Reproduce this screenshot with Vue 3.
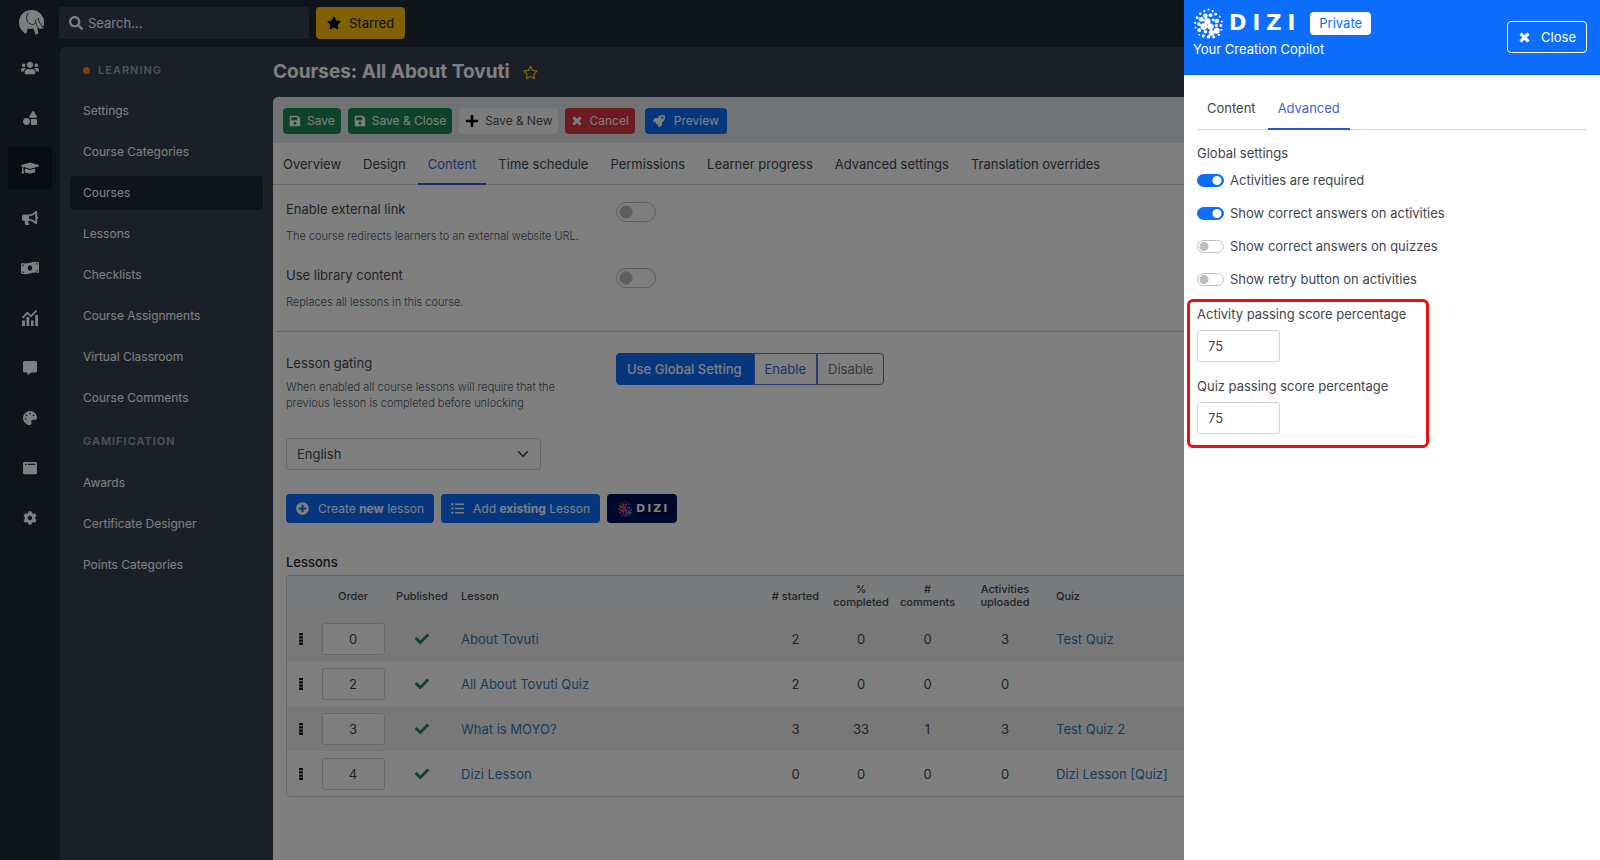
<script setup>
import { ref } from 'vue'

const icons = {
  users: { w: 640, d: 'M96 224c35.300 0 64-28.700 64-64s-28.700-64-64-64-64 28.700-64 64 28.700 64 64 64zm448 0c35.300 0 64-28.700 64-64s-28.700-64-64-64-64 28.700-64 64 28.700 64 64 64zm32 32h-64c-17.600 0-33.500 7.100-45.100 18.600 40.300 22.100 68.900 62 75.100 109.400h66c17.700 0 32-14.300 32-32v-32c0-35.300-28.700-64-64-64zm-256 0c61.900 0 112-50.100 112-112S381.900 32 320 32 208 82.100 208 144s50.100 112 112 112zm76.800 32h-8.300c-20.800 10-43.900 16-68.500 16s-47.600-6-68.500-16h-8.300C179.600 288 128 339.600 128 403.200V432c0 26.500 21.500 48 48 48h288c26.500 0 48-21.500 48-48v-28.800c0-63.600-51.600-115.200-115.200-115.200zm-223.700-13.400C161.500 263.100 145.600 256 128 256H64c-35.300 0-64 28.700-64 64v32c0 17.700 14.300 32 32 32h65.900c6.300-47.400 34.900-87.300 75.200-109.400z' },
  shapes: { w: 512, d: 'M128 256C57.300 256 0 313.300 0 384s57.300 128 128 128 128-57.300 128-128-57.300-128-128-128zm379-54.900L400.100 18.300c-15.300-25.100-49-23.200-62.300 0L229 201.100c-12.200 20.900 3.100 47 27.700 47H479.300c24.600 0 39.900-26.100 27.700-47zM480 288H320c-17.700 0-32 14.300-32 32v160c0 17.700 14.300 32 32 32h160c17.700 0 32-14.300 32-32V320c0-17.700-14.300-32-32-32z' },
  cap: { w: 640, d: 'M622.300 153.200L343.400 67.500c-15.200-4.700-31.600-4.700-46.800 0L17.700 153.200c-23.600 7.300-23.600 38.200 0 45.500l48.600 14.900c-10.700 13.200-17.200 29.300-17.800 46.900C38.800 266.100 32 276.200 32 288c0 10.800 5.700 19.900 13.900 25.700L20.300 428.500C18.100 438.500 25.700 448 35.900 448h56.100c10.300 0 17.900-9.500 15.700-19.500L82.100 313.700C90.300 307.900 96 298.800 96 288c0-11.500-6.500-21.200-15.700-26.900.8-15.200 8.500-28.500 20.700-36.900L296.600 284.500c9.100 2.800 27 6.300 46.800 0l278.900-85.700c23.600-7.300 23.600-38.200 0-45.600zM352.800 315.100c-28.500 8.800-52.800 3.900-65.600 0l-145-44.600L128 384c0 35.300 86 64 192 64s192-28.700 192-64l-14.200-113.500z' },
  bullhorn: { w: 576, d: 'M576 240c0-23.600-12.900-44-32-55.100V32c0-8.700-7-32-32-32-7.100 0-14.200 2.400-20 7l-85 68c-42.700 34.200-96.300 53-151 53H64c-35.300 0-64 28.700-64 64v96c0 35.300 28.700 64 64 64h33.700c-1.400 10.500-2.200 21.200-2.200 32.200 0 39.800 9.300 77.300 25.600 110.900 5.200 10.700 16.500 16.900 28.400 16.900h74.300c26.100 0 41.700-29.800 25.900-50.600-16.400-21.500-26.200-48.200-26.200-77.200 0-11.200 1.600-22 4.300-32.200H256c54.700 0 108.300 18.800 151 53l85 68c5.700 4.500 12.700 7 20 7 24.900 0 32-22.800 32-32V295.100c19.100-11.100 32-31.500 32-55.100zm-96 141.400l-33-26.400c-54-43.200-121.900-67-191-67v-96c69.100 0 137-23.800 191-67l33-26.400z' },
  money: { w: 640, d: 'M621.200 54.500C582.400 38.200 543.600 32 504.800 32c-123.200 0-246.300 62.300-369.500 62.300-30.900 0-61.800-3.900-92.700-13.700C38.900 79.400 35.200 78.900 31.600 78.900 15 78.900 0 91.300 0 108.400v317.200c0 12.600 7.200 24.600 18.800 29.500C57.600 471.400 96.400 480 135.200 480c123.200 0 246.400-62.300 369.500-62.300 30.900 0 61.800 3.900 92.700 13.700 3.700 1.200 7.400 1.700 11 1.700 16.600 0 31.600-12.400 31.600-29.500V84c0-12.600-7.200-24.600-18.800-29.500zM48 132.200c20.100 5 41.100 7.600 62.200 9.100C105.100 169.900 79.500 192 48 192zm0 285v-47.800c34.400 0 62.200 27.300 63.900 61.300-22.700-1.700-44.100-6.100-63.900-13.500zM320 352c-44.200 0-80-43-80-96 0-53 35.800-96 80-96s80 43 80 96-35.800 96-80 96zm272 27.800c-17.500-4.400-35.600-6.900-54-8.500 4-26.800 26.500-47.600 54-49.400zm0-236.100c-30.900-2.100-55.500-27.100-56.400-58.300 19.500 2 38.600 5.700 56.400 11.900z' },
  comment: { w: 512, d: 'M448 0H64C28.700 0 0 28.700 0 64v288c0 35.300 28.700 64 64 64h96v84c0 9.800 11.200 15.500 19.100 9.700L304 416h144c35.300 0 64-28.700 64-64V64c0-35.300-28.700-64-64-64z' },
  palette: { w: 512, d: 'M204.300 5C104.900 24.400 24.800 104.300 5.200 203.400c-37 187 131.700 326.400 258.800 306.700 41.200-6.400 61.400-54.600 42.500-91.700-23.100-45.400 9.900-98.400 60.900-98.400h79.700c35.800 0 64.800-29.600 64.900-65.300C511.500 97.100 368.100-26.900 204.300 5zM96 320c-17.700 0-32-14.300-32-32s14.300-32 32-32 32 14.300 32 32-14.300 32-32 32zm32-128c-17.700 0-32-14.300-32-32s14.300-32 32-32 32 14.300 32 32-14.300 32-32 32zm128-64c-17.700 0-32-14.300-32-32s14.300-32 32-32 32 14.300 32 32-14.300 32-32 32zm128 64c-17.700 0-32-14.300-32-32s14.300-32 32-32 32 14.300 32 32-14.300 32-32 32z' },
  window: { w: 512, d: 'M464 32H48C21 32 0 53 0 80v352c0 27 21 48 48 48h416c27 0 48-21 48-48V80c0-27-21-48-48-48zM128 144H64V96h64zm320 0H176V96h272z' },
  cog: { w: 512, d: 'M487.400 315.700l-42.600-24.600c4.300-23.200 4.300-47 0-70.200l42.600-24.600c4.900-2.800 7.100-8.600 5.500-14-11.100-35.600-30-67.800-54.700-94.600-3.800-4.100-10-5.100-14.800-2.300L380.800 110c-17.900-15.400-38.500-27.300-60.800-35.100V25.800c0-5.600-3.900-10.500-9.400-11.700-36.700-8.200-74.300-7.800-109.200 0-5.500 1.200-9.400 6.100-9.400 11.700V75c-22.200 7.900-42.800 19.800-60.800 35.100L88.700 85.500c-4.900-2.800-11-1.900-14.800 2.300-24.700 26.700-43.600 58.900-54.700 94.600-1.700 5.400.6 11.200 5.500 14L67.300 221c-4.300 23.200-4.300 47 0 70.200l-42.600 24.600c-4.900 2.800-7.100 8.600-5.500 14 11.100 35.600 30 67.800 54.700 94.600 3.800 4.100 10 5.100 14.800 2.300l42.600-24.600c17.900 15.400 38.500 27.300 60.800 35.100v49.200c0 5.600 3.900 10.500 9.400 11.700 36.700 8.200 74.300 7.800 109.200 0 5.500-1.200 9.400-6.100 9.400-11.700v-49.200c22.200-7.900 42.800-19.800 60.800-35.100l42.600 24.600c4.900 2.800 11 1.900 14.800-2.300 24.700-26.700 43.600-58.900 54.700-94.600 1.500-5.500-.7-11.300-5.600-14.100zM256 336c-44.100 0-80-35.900-80-80s35.900-80 80-80 80 35.900 80 80-35.900 80-80 80z' },
  chart: { w: 512, d: 'M10 216L152 74c14-14 32-14 46 0l86 84L432 12h-2c12-12 30-12 42 0s12 30 0 42L308 218c-14 14-32 14-46 0l-87-84L52 257c-12 12-30 12-42 0s-12-29 0-41zM0 336h96v176H0zm144-112h88v288h-88zm144 112h80v176h-80zm136-176h88v352h-88z' },
  search: { w: 512, d: 'M505 442.700L405.300 343c-4.500-4.500-10.600-7-17-7H372c27.600-35.300 44-79.700 44-128C416 93.100 322.900 0 208 0S0 93.100 0 208s93.100 208 208 208c48.300 0 92.700-16.400 128-44v16.300c0 6.400 2.500 12.500 7 17l99.700 99.700c9.400 9.400 24.600 9.400 33.900 0l28.300-28.300c9.400-9.400 9.400-24.600.1-34zM208 336c-70.700 0-128-57.200-128-128 0-70.700 57.200-128 128-128 70.700 0 128 57.200 128 128 0 70.700-57.200 128-128 128z' },
  star: { w: 576, d: 'M259.300 17.800L194 150.200 47.900 171.500c-26.200 3.800-36.700 36.100-17.700 54.600l105.700 103-25 145.500c-4.500 26.300 23.200 46 46.400 33.700L288 439.600l130.700 68.700c23.200 12.200 50.900-7.400 46.400-33.700l-25-145.500 105.700-103c19-18.500 8.500-50.800-17.700-54.600L382 150.200 316.700 17.800c-11.700-23.600-45.600-23.900-57.400 0z' },
  starOutline: { w: 576, d: 'M528.100 171.500L382 150.200 316.700 17.800c-11.700-23.600-45.600-23.900-57.400 0L194 150.200 47.900 171.500c-26.200 3.800-36.700 36.100-17.700 54.600l105.700 103-25 145.500c-4.500 26.300 23.200 46 46.400 33.700L288 439.600l130.700 68.700c23.200 12.200 50.900-7.400 46.400-33.700l-25-145.500 105.700-103c19-18.500 8.500-50.800-17.700-54.600zM388.600 312.300l23.700 138.400L288 385.400l-124.300 65.300 23.700-138.400-100.600-98 139-20.200 62.200-126 62.200 126 139 20.200-100.600 98z' },
  save: { w: 448, d: 'M433.900 129.900l-83.900-83.900A48 48 0 0 0 316.100 32H48C21.500 32 0 53.500 0 80v352c0 26.500 21.500 48 48 48h352c26.500 0 48-21.500 48-48V163.900a48 48 0 0 0-14.100-34zM224 416c-35.300 0-64-28.700-64-64s28.700-64 64-64 64 28.700 64 64-28.700 64-64 64zm96-304.500V212c0 6.600-5.400 12-12 12H76c-6.600 0-12-5.400-12-12V108c0-6.600 5.400-12 12-12h228.500c3.200 0 6.200 1.300 8.500 3.500l3.500 3.500c2.200 2.200 3.500 5.300 3.500 8.500z' },
  plus: { w: 448, d: 'M416 208H272V64c0-17.700-14.300-32-32-32h-32c-17.700 0-32 14.300-32 32v144H32c-17.700 0-32 14.300-32 32v32c0 17.700 14.300 32 32 32h144v144c0 17.700 14.300 32 32 32h32c17.700 0 32-14.300 32-32V304h144c17.700 0 32-14.300 32-32v-32c0-17.700-14.300-32-32-32z' },
  times: { w: 384, d: 'M323.100 441l53.900-53.900c9.400-9.400 9.400-24.500 0-33.900L279.800 256l97.200-97.200c9.400-9.400 9.400-24.500 0-33.900L323.100 71c-9.400-9.400-24.500-9.400-33.900 0L192 168.200 94.800 71c-9.400-9.400-24.500-9.400-33.900 0L7 124.900c-9.400 9.400-9.400 24.500 0 33.900l97.200 97.200L7 353.200c-9.400 9.400-9.400 24.500 0 33.900L60.900 441c9.400 9.400 24.500 9.400 33.900 0l97.200-97.200 97.200 97.200c9.300 9.300 24.500 9.300 33.900 0z' },
  rocket: { w: 512, d: 'M505.100 19.100C503.800 13 499 8.200 492.900 6.900 460.700 0 435.500 0 410.400 0 307.200 0 245.300 55.200 199 128H94.900c-18.200 0-34.800 10.300-42.900 26.500L2.600 253.300c-8 16 3.600 34.700 21.500 34.700h95.100c-5.900 12.800-11.900 25.500-18 37.700-3.100 6.200-1.900 13.600 3 18.500l63.600 63.600c4.900 4.900 12.300 6.100 18.500 3 12.200-6.100 24.900-12 37.700-17.900V488c0 17.800 18.800 29.400 34.700 21.500l98.700-49.400c16.300-8.100 26.500-24.800 26.500-42.900V313c72.600-46.400 128-108.500 128-211.100.1-25.200.1-50.400-6.800-82.800zM400 160c-26.500 0-48-21.500-48-48s21.500-48 48-48 48 21.500 48 48-21.500 48-48 48z' },
  plusCircle: { w: 512, d: 'M256 8C119 8 8 119 8 256s111 248 248 248 248-111 248-248S393 8 256 8zm144 276c0 6.600-5.400 12-12 12h-92v92c0 6.600-5.400 12-12 12h-56c-6.600 0-12-5.400-12-12v-92h-92c-6.600 0-12-5.400-12-12v-56c0-6.600 5.400-12 12-12h92v-92c0-6.600 5.400-12 12-12h56c6.600 0 12 5.400 12 12v92h92c6.600 0 12 5.400 12 12z' },
  list: { w: 512, d: 'M16 48h80v80H16zm0 168h80v80H16zm0 168h80v80H16zM176 56h320q16 0 16 16v32q0 16-16 16H176q-16 0-16-16V72q0-16 16-16zm0 168h320q16 0 16 16v32q0 16-16 16H176q-16 0-16-16v-32q0-16 16-16zm0 168h320q16 0 16 16v32q0 16-16 16H176q-16 0-16-16v-32q0-16 16-16z' },
  check: { w: 512, d: 'M173.900 439.400l-166.400-166.400c-10-10-10-26.200 0-36.200l36.200-36.200c10-10 26.200-10 36.200 0L192 312.700 432.100 72.600c10-10 26.200-10 36.200 0l36.200 36.200c10 10 10 26.200 0 36.200L210.100 439.400c-10 10-26.200 10-36.200 0z' },
  grip: { w: 192, d: 'M16 0h160v100H16zM16 136h160v100H16zM16 272h160v100H16zM16 408h160v100H16z' },
}

const rail = [
  { icon: 'users', label: 'Users', size: 18 },
  { icon: 'shapes', label: 'Content', size: 14 },
  { icon: 'cap', label: 'Learning', size: 18, active: true },
  { icon: 'bullhorn', label: 'Marketing', size: 16 },
  { icon: 'money', label: 'Commerce', size: 18 },
  { icon: 'chart', label: 'Reports', size: 16 },
  { icon: 'comment', label: 'Messages', size: 14 },
  { icon: 'palette', label: 'Branding', size: 14 },
  { icon: 'window', label: 'Pages', size: 14 },
  { icon: 'cog', label: 'Settings', size: 14 },
]

const learning = ['Settings', 'Course Categories', 'Courses', 'Lessons', 'Checklists', 'Course Assignments', 'Virtual Classroom', 'Course Comments']
const gamification = ['Awards', 'Certificate Designer', 'Points Categories']
const tabs = ['Overview', 'Design', 'Content', 'Time schedule', 'Permissions', 'Learner progress', 'Advanced settings', 'Translation overrides']

const lessons = ref([
  { order: 0, name: 'About Tovuti', started: 2, completed: 0, comments: 0, activities: 3, quiz: 'Test Quiz' },
  { order: 2, name: 'All About Tovuti Quiz', started: 2, completed: 0, comments: 0, activities: 0, quiz: '' },
  { order: 3, name: 'What is MOYO?', started: 3, completed: 33, comments: 1, activities: 3, quiz: 'Test Quiz 2' },
  { order: 4, name: 'Dizi Lesson', started: 0, completed: 0, comments: 0, activities: 0, quiz: 'Dizi Lesson [Quiz]' },
])

const switches = ref([
  { label: 'Activities are required', on: true },
  { label: 'Show correct answers on activities', on: true },
  { label: 'Show correct answers on quizzes', on: false },
  { label: 'Show retry button on activities', on: false },
])
const externalLink = ref(false)
const libraryContent = ref(false)
const activityScore = ref('75')
const quizScore = ref('75')

const Icon = (props) => {
  const i = icons[props.name]
  return h('svg', { class: 'icon', viewBox: `0 0 ${i.w} 512`, width: props.size, height: props.size, 'aria-hidden': 'true' }, [
    h('path', { d: i.d, fill: 'currentColor', 'fill-rule': 'evenodd' }),
  ])
}
Icon.props = ['name', 'size']

const blobs = [
  [15, 1.5, 1], [11, 3, 1.1], [19, 3, 1.1], [7, 5.5, 1.2], [12, 7.5, 2.2], [17, 7, 1.8], [22, 6, 1.3], [26, 8.500, 0.9],
  [4, 9.500, 1.4], [8, 11, 2.4], [14, 13, 3], [19.5, 11.5, 1.3], [23, 12.5, 2.2], [28, 13, 1],
  [2, 14.500, 1.1], [5.500, 15.500, 1.7], [10.5, 18, 3.2], [17, 18, 3], [22.5, 17, 1.6], [27, 17, 1.4],
  [2.500, 19, 0.9], [6, 21.500, 1.8], [12, 23, 1.7], [18, 24, 2.8], [23, 22, 2.8], [27.500, 21, 1],
  [6, 26, 0.9], [10, 27, 1.5], [15, 28, 1.6], [20, 28, 1.4], [25, 26, 1.2],
]
const blobColors = ['#fb923c', '#f97316', '#ec4899', '#8b5cf6', '#22d3ee']
const Sphere = (props) => h('svg', { viewBox: '0 0 30 30', width: props.size, height: props.size, 'aria-hidden': 'true' }, [
  ...blobs.map(([x, y, r]) => h('circle', {
    cx: x, cy: y, r,
    fill: props.colored ? blobColors[Math.min(4, Math.floor((x + y) / 11))] : '#fff',
  })),
  h('path', {
    d: 'M8 11L14 13 M14 13L12 8 M10.500 18L14 13 M10.500 18L6 16 M10.500 18L17 18 M18 24L23 22 M17 18L18 24 M15 28L18 24',
    stroke: props.colored ? '#c0468f' : '#fff', 'stroke-width': 2, 'stroke-linecap': 'round', fill: 'none',
  }),
])
Sphere.props = ['size', 'colored']
</script>

<script>
import { h } from 'vue'
export default { name: 'CourseEditor' }
</script>

<template>
  <div class="app">
    <div class="page">
      <nav class="rail" aria-label="Main">
        <a href="#" class="brand" aria-label="Home">
          <svg viewBox="0 0 24 24" width="25" height="25" aria-hidden="true">
            <path fill="#fff" d="M12 0C5 0 0 5.500 0 12c0 4.500 2.500 8.500 6.500 10.700 1.300-1.500 1.300-3.700 2-5.200 1.500.8 3.200.8 4.700.2 1.600 1.200 2.100 3.300 2.300 6 1.500-.4 2.600-1 3.300-1.700-1-2.300-1.200-4-.6-5.300 1.400 1.600 3.800 1.900 5.600.1-1.500.2-2.300-.5-2.200-1.500l2 .2A12 12 0 0 0 12 0z" />
            <path fill="none" stroke="#1f2937" stroke-width="0.900" d="M9 2.500C6 7 7 12.500 12 13.800c3 .6 4.500-1.500 4-4.500M19 9.500c.5 2.500 1.500 4.500 3 5.700M16.500 12.500c.2 2 .8 3.300 2 4.300" />
            <circle cx="18.500" cy="8.500" r="0.800" fill="#1f2937" />
          </svg>
        </a>
        <a v-for="r in rail" :key="r.icon" href="#" class="rail-link" :class="{ active: r.active }" :aria-label="r.label">
          <Icon :name="r.icon" :size="r.size" />
        </a>
      </nav>

      <div class="right">
        <header class="topbar">
          <label class="search">
            <Icon name="search" :size="14" />
            <input type="search" placeholder="Search..." aria-label="Search" />
          </label>
          <button type="button" class="starred"><Icon name="star" :size="14" />Starred</button>
        </header>

        <div class="panel">
          <aside class="sidebar">
            <h2 class="group"><span class="dot"></span>LEARNING</h2>
            <a v-for="l in learning" :key="l" href="#" class="side-link" :class="{ active: l === 'Courses' }">{{ l }}</a>
            <h2 class="group second">GAMIFICATION</h2>
            <a v-for="l in gamification" :key="l" href="#" class="side-link">{{ l }}</a>
          </aside>

          <main class="main">
            <div class="title-row">
              <h1>Courses: All About Tovuti</h1>
              <button type="button" class="fav" aria-label="Star this page"><Icon name="starOutline" :size="15" /></button>
            </div>

            <div class="card">
              <div class="toolbar">
                <button type="button" class="btn green"><Icon name="save" :size="12" />Save</button>
                <button type="button" class="btn green"><Icon name="save" :size="12" />Save &amp; Close</button>
                <button type="button" class="btn light"><Icon name="plus" :size="14" />Save &amp; New</button>
                <button type="button" class="btn red"><Icon name="times" :size="12" />Cancel</button>
                <button type="button" class="btn blue"><Icon name="rocket" :size="12" />Preview</button>
              </div>
              <nav class="tabs" aria-label="Course sections">
                <a v-for="t in tabs" :key="t" href="#" :class="{ active: t === 'Content' }">{{ t }}</a>
              </nav>

              <div class="body">
                <div class="field">
                  <div class="field-text">
                    <label for="ext">Enable external link</label>
                    <p>The course redirects learners to an external website URL.</p>
                  </div>
                  <input id="ext" v-model="externalLink" type="checkbox" class="switch large" />
                </div>
                <div class="field">
                  <div class="field-text">
                    <label for="lib">Use library content</label>
                    <p>Replaces all lessons in this course.</p>
                  </div>
                  <input id="lib" v-model="libraryContent" type="checkbox" class="switch large" />
                </div>
                <hr />
                <div class="field gating">
                  <div class="field-text">
                    <span id="gating">Lesson gating</span>
                    <p>When enabled all course lessons will require that the<br />previous lesson is completed before unlocking</p>
                  </div>
                  <div class="segmented" role="group" aria-labelledby="gating">
                    <button type="button" class="chosen">Use Global Setting</button>
                    <button type="button" class="enable">Enable</button>
                    <button type="button" class="disable">Disable</button>
                  </div>
                </div>

                <div class="select-wrap">
                  <select aria-label="Language"><option>English</option></select>
                  <svg class="chevron" viewBox="0 0 16 16" width="12" height="12" aria-hidden="true"><path d="M2 5l6 6 6-6" fill="none" stroke="#343a40" stroke-width="2" stroke-linecap="round" stroke-linejoin="round" /></svg>
                </div>

                <div class="actions">
                  <button type="button" class="action"><Icon name="plusCircle" :size="13" /><span>Create <b>new</b> lesson</span></button>
                  <button type="button" class="action"><Icon name="list" :size="13" /><span>Add <b>existing</b> Lesson</span></button>
                  <button type="button" class="dizi-btn"><Sphere :size="16" :colored="true" /><span>DIZI</span></button>
                </div>

                <h3>Lessons</h3>
                <table>
                  <colgroup>
                    <col class="c-grip" /><col class="c-order" /><col class="c-pub" /><col class="c-lesson" />
                    <col class="c-start" /><col class="c-comp" /><col class="c-comm" /><col class="c-act" /><col />
                  </colgroup>
                  <thead>
                    <tr>
                      <th aria-label="Reorder"></th><th>Order</th><th>Published</th><th class="left">Lesson</th>
                      <th># started</th><th>%<br />completed</th><th>#<br />comments</th><th>Activities<br />uploaded</th><th class="left">Quiz</th>
                    </tr>
                  </thead>
                  <tbody>
                    <tr v-for="l in lessons" :key="l.name">
                      <td class="grip"><Icon name="grip" :size="12" /></td>
                      <td><input v-model="l.order" type="text" class="order" :aria-label="'Order of ' + l.name" /></td>
                      <td class="ok"><Icon name="check" :size="14" /></td>
                      <td class="left"><a href="#">{{ l.name }}</a></td>
                      <td>{{ l.started }}</td><td>{{ l.completed }}</td><td>{{ l.comments }}</td><td>{{ l.activities }}</td>
                      <td class="left"><a v-if="l.quiz" href="#">{{ l.quiz }}</a></td>
                    </tr>
                  </tbody>
                </table>
              </div>
            </div>
          </main>
        </div>
      </div>
    </div>

    <div class="backdrop"></div>

    <aside class="drawer" aria-label="DIZI">
      <header class="drawer-head">
        <div>
          <div class="logo-row">
            <Sphere :size="31" /><span class="wordmark">DIZI</span><span class="badge">Private</span>
          </div>
          <p class="tagline">Your Creation Copilot</p>
        </div>
        <button type="button" class="close"><Icon name="times" :size="13" />Close</button>
      </header>
      <div class="drawer-body">
        <nav class="tabs drawer-tabs" aria-label="Copilot sections">
          <a href="#">Content</a>
          <a href="#" class="active">Advanced</a>
        </nav>
        <h2>Global settings</h2>
        <div class="switches">
          <label v-for="s in switches" :key="s.label"><input v-model="s.on" type="checkbox" class="switch" />{{ s.label }}</label>
        </div>
        <div class="scores">
          <label for="act">Activity passing score percentage</label>
          <input id="act" v-model="activityScore" type="text" />
          <label for="quiz">Quiz passing score percentage</label>
          <input id="quiz" v-model="quizScore" type="text" />
        </div>
      </div>
    </aside>
  </div>
</template>

<style>
body {
  margin: 0;
}
.icon {
  flex: none;
  display: block;
}
</style>

<style scoped>
* {
  box-sizing: border-box;
}
.app {
  position: relative;
  min-height: 100vh;
  overflow: hidden;
  font-family: Inter, "Liberation Sans", sans-serif;
  font-size: 13px;
  font-weight: 400;
  line-height: 20px;
  color: #40464c;
}
a {
  color: inherit;
  text-decoration: none;
}
button,
input,
select {
  font: inherit;
  color: inherit;
  margin: 0;
}
h1,
h2,
h3,
p {
  margin: 0;
}
.page {
  display: flex;
  min-height: 100vh;
  background: #1f2937;
}
.rail {
  width: 60px;
  flex: none;
  display: flex;
  flex-direction: column;
  align-items: center;
  gap: 6px;
  color: #fff;
}
.brand {
  height: 40px;
  padding: 10px 0 0 3px;
}
.rail-link {
  display: flex;
  align-items: center;
  justify-content: center;
  width: 44px;
  height: 44px;
  border-radius: 4px;
}
.rail-link.active {
  background: #111827;
}
.right {
  flex: 1;
  min-width: 0;
  display: flex;
  flex-direction: column;
}
.topbar {
  display: flex;
  gap: 7px;
  height: 47px;
  margin-left: -1px;
  padding-top: 7px;
}
.search {
  display: flex;
  align-items: center;
  gap: 5px;
  width: 250px;
  height: 32px;
  padding: 0 10px;
  border-radius: 3px;
  background: #374151;
  color: #fff;
}
.search input {
  flex: 1;
  min-width: 0;
  border: 0;
  padding: 0;
  background: transparent;
  font-size: 13px;
  outline: 0;
}
.search input::placeholder {
  color: #fff;
  opacity: 1;
}
.starred {
  display: flex;
  align-items: center;
  gap: 8px;
  height: 32px;
  padding: 0 11px;
  border: 0;
  border-radius: 4px;
  background: #ffc107;
  color: #212529;
}
.starred .icon {
  color: #000;
}
.panel {
  flex: 1;
  display: flex;
  border-top-left-radius: 6px;
  background: #374151;
}
.sidebar {
  width: 213px;
  flex: none;
  padding: 13px 10px 0;
}
.group {
  display: flex;
  align-items: center;
  height: 20px;
  padding-left: 13px;
  margin-bottom: 14px;
  font-size: 11px;
  font-weight: 600;
  letter-spacing: 1px;
  color: #9ca3af;
}
.group.second {
  margin: 16px 0 15px;
}
.dot {
  width: 7px;
  height: 7px;
  margin-right: 8px;
  border-radius: 50%;
  background: #fd7e14;
}
.side-link {
  display: flex;
  align-items: center;
  height: 34px;
  margin-bottom: 7px;
  padding: 0 13px;
  border-radius: 4px;
  font-size: 12px;
  color: #fff;
}
.side-link.active {
  background: #1f2937;
}
.main {
  flex: 1;
  min-width: 0;
  display: flex;
  flex-direction: column;
}
.title-row {
  display: flex;
  align-items: center;
  gap: 13px;
  height: 50px;
}
h1 {
  font-size: 19px;
  font-weight: 700;
  line-height: 28px;
  color: #fff;
}
.fav {
  border: 0;
  padding: 0;
  background: none;
  color: #ffc107;
}
.card {
  flex: 1;
  border-top-left-radius: 6px;
  background: #fff;
}
.toolbar {
  display: flex;
  gap: 7px;
  padding: 11px 10px 9px;
  border-top-left-radius: 6px;
  background: #e2e4e8;
}
.btn {
  display: flex;
  align-items: center;
  gap: 6px;
  height: 26px;
  padding: 0 6px;
  border: 0;
  border-radius: 4px;
  font-size: 12px;
  color: #fff;
}
.btn.green {
  background: #198754;
}
.btn.light {
  background: #f8f9fa;
  color: #212529;
  font-weight: 300;
}
.btn.light .icon {
  color: #000;
}
.btn.red {
  background: #dc3545;
}
.btn.blue {
  gap: 9px;
  margin-left: 3px;
  padding: 0 8px;
  background: #0d6efd;
}
.tabs {
  display: flex;
  gap: 2px;
  border-bottom: 1px solid #d3d6da;
}
.tabs a {
  height: 42px;
  margin-bottom: -1px;
  padding: 11px 10px 0;
  border-bottom: 2px solid transparent;
}
.tabs a.active {
  color: #3f62dc;
  border-color: #2f55d4;
}
.body {
  padding: 14px 13px 0;
}
.field {
  display: flex;
  height: 66px;
}
.field-text {
  width: 330px;
}
.field p {
  margin-top: 9px;
  font-size: 11px;
  font-weight: 300;
  line-height: 16px;
  color: #4b5563;
}
.field.gating {
  height: 85px;
}
.gating p {
  margin-top: 6px;
}
.switch {
  appearance: none;
  width: 27px;
  height: 13px;
  flex: none;
  border: 1px solid #bfbfbf;
  border-radius: 10px;
  background: radial-gradient(circle at 6px 50%, #bfbfbf 4px, transparent 5px) #fff;
}
.switch:checked {
  border-color: #0d6efd;
  background: radial-gradient(circle at 19px 50%, #fff 4px, transparent 5px) #0d6efd;
}
.switch.large {
  width: 40px;
  height: 20px;
  margin-top: 3px;
  background: radial-gradient(circle at 9px 50%, #bfbfbf 6px, transparent 7px) #fff;
}
hr {
  height: 1px;
  margin: 0 -13px 21px -10px;
  border: 0;
  background: #c9ccd0;
}
.segmented {
  display: flex;
  height: 32px;
}
.segmented button {
  padding: 0 10px;
  border: 1px solid #0d6efd;
  background: #fff;
}
.segmented .chosen {
  padding: 0 11px 0 10px;
  border-radius: 4px 0 0 4px;
  background: #0d6efd;
  color: #fff;
  font-weight: 500;
}
.segmented .enable {
  border-color: #5b7be0;
  color: #3f62dc;
}
.segmented .disable {
  border-color: #6c757d;
  border-radius: 0 4px 4px 0;
  color: #6c757d;
}
.select-wrap {
  position: relative;
  width: 255px;
}
.select-wrap select {
  appearance: none;
  display: block;
  width: 100%;
  height: 32px;
  padding: 0 10px;
  border: 1px solid #ced4da;
  border-radius: 3px;
  background: #fff;
}
.chevron {
  position: absolute;
  right: 12px;
  top: 10px;
}
.actions {
  display: flex;
  gap: 7px;
  margin-top: 24px;
}
.action {
  display: flex;
  align-items: center;
  gap: 9px;
  height: 29px;
  padding: 0 10px;
  border: 0;
  border-radius: 4px;
  background: #0d6efd;
  color: #fff;
  font-size: 12px;
}
.action b {
  font-weight: 700;
}
.dizi-btn {
  display: flex;
  align-items: center;
  gap: 3px;
  height: 29px;
  padding: 0 8px 0 10px;
  border: 0;
  border-radius: 4px;
  background: #001058;
  color: #fff;
  font-family: "DejaVu Sans", sans-serif;
  font-size: 11px;
  font-weight: 700;
  letter-spacing: 2px;
}
h3 {
  margin: 29px 0 3px;
  font-size: 13px;
  font-weight: 500;
  color: #212529;
}
table {
  width: 100%;
  table-layout: fixed;
  border-spacing: 0;
  border: 1px solid #ced2da;
  border-radius: 3px;
}
.c-grip { width: 28px; }
.c-order { width: 76px; }
.c-pub { width: 62px; }
.c-lesson { width: 309px; }
.c-start { width: 67px; }
.c-comp { width: 64px; }
.c-comm { width: 69px; }
.c-act { width: 86px; }
th {
  height: 40px;
  padding: 0;
  background: #f5f6fa;
  font-size: 11px;
  font-weight: 500;
  line-height: 13px;
}
td {
  height: 45px;
  padding: 0;
  text-align: center;
}
th.left,
td.left {
  padding-left: 8px;
  text-align: left;
}
tbody tr:nth-child(odd) {
  background: #f1f1f1;
}
td a {
  color: #2f7abc;
}
.grip .icon,
.ok .icon {
  margin: 0 auto;
}
.grip {
  color: #000;
}
.ok {
  color: #198754;
}
.order {
  width: 63px;
  height: 32px;
  padding: 0;
  border: 1px solid #ced4da;
  border-radius: 3px;
  background: #fff;
  text-align: center;
}
.backdrop {
  position: absolute;
  inset: 0;
  background: rgba(0, 0, 0, 0.5);
}
.drawer {
  position: absolute;
  top: 0;
  right: 0;
  bottom: 0;
  width: 416px;
  background: #fff;
}
.drawer-head {
  display: flex;
  align-items: center;
  justify-content: space-between;
  height: 75px;
  padding: 0 13px 0 9px;
  border-bottom: 1px solid #0a58ca;
  background: #0d6efd;
  color: #fff;
}
.logo-row {
  display: flex;
  align-items: center;
}
.wordmark {
  margin-left: 5px;
  font-family: "DejaVu Sans", sans-serif;
  font-size: 21px;
  font-weight: 700;
  letter-spacing: 6px;
}
.badge {
  margin-left: 9px;
  padding: 1px 9px 2px;
  border-radius: 4px;
  background: #fff;
  color: #0d6efd;
}
.tagline {
  margin-bottom: 8px;
}
.close {
  display: flex;
  align-items: center;
  gap: 10px;
  height: 32px;
  padding: 0 10px;
  border: 1px solid #fff;
  border-radius: 4px;
  background: transparent;
}
.drawer-body {
  padding: 14px 13px 0;
}
.drawer-tabs a {
  height: 41px;
  padding-top: 9px;
}
.drawer-body h2 {
  margin-top: 13px;
  font-size: 13px;
  font-weight: 400;
}
.switches {
  display: grid;
  gap: 13px;
  margin-top: 7px;
}
.switches label {
  display: flex;
  align-items: center;
  gap: 6px;
}
.scores {
  display: flex;
  flex-direction: column;
  align-items: flex-start;
  width: 242px;
  margin: 10px 0 0 -10px;
  padding: 2px 7px 11px;
  border: 3px solid #ee0e0e;
  border-radius: 6px;
}
.scores input {
  width: 83px;
  height: 32px;
  margin: 6px 0 14px;
  padding: 0 10px;
  border: 1px solid #ced4da;
  border-radius: 3px;
}
.scores input:last-child {
  margin-bottom: 0;
}
</style>
